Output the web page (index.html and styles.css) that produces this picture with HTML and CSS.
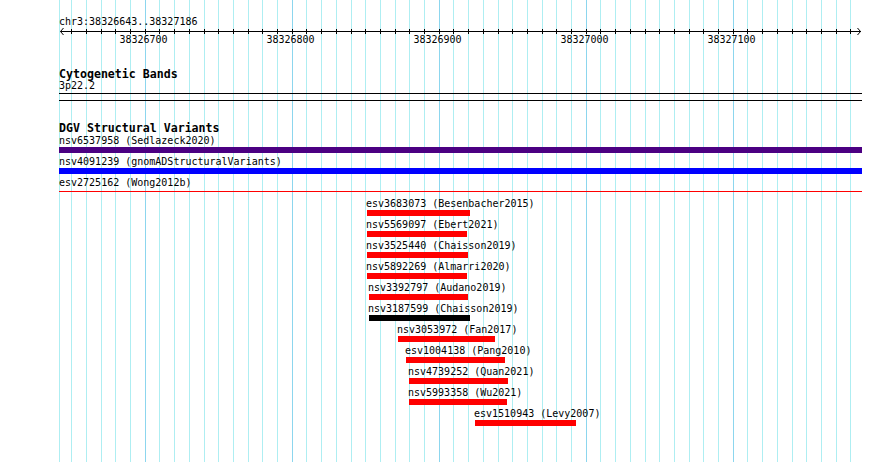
FILE: index.html
```html
<!DOCTYPE html>
<html>
<head>
<meta charset="utf-8">
<title>DGV Structural Variants</title>
<link rel="stylesheet" href="styles.css">
</head>
<body>
<div class="browser">
  <svg class="grid" width="890" height="462" viewBox="0 0 890 462" aria-hidden="true">
    <path class="minor" d="M59.5 0V462M71.5 0V462M86.5 0V462M101.5 0V462M115.5 0V462M130.5 0V462M159.5 0V462M174.5 0V462M189.5 0V462M204.5 0V462M218.5 0V462M233.5 0V462M248.5 0V462M262.5 0V462M277.5 0V462M306.5 0V462M321.5 0V462M336.5 0V462M351.5 0V462M365.5 0V462M380.5 0V462M395.5 0V462M409.5 0V462M424.5 0V462M453.5 0V462M468.5 0V462M483.5 0V462M498.5 0V462M512.5 0V462M527.5 0V462M542.5 0V462M556.5 0V462M571.5 0V462M600.5 0V462M615.5 0V462M630.5 0V462M645.5 0V462M659.5 0V462M674.5 0V462M689.5 0V462M703.5 0V462M718.5 0V462M747.5 0V462M762.5 0V462M777.5 0V462M792.5 0V462M806.5 0V462M821.5 0V462M836.5 0V462M850.5 0V462"/>
    <path class="major" d="M145.5 0V462M292.5 0V462M439.5 0V462M586.5 0V462M733.5 0V462"/>
  </svg>

  <div class="locus">chr3:38326643..38327186</div>

  <svg class="ruler" width="890" height="19" viewBox="0 0 890 19">
    <path class="axis" d="M60.5 4.5H861"/>
    <path class="axis" d="M63.5 1L60.5 4.5L63.5 8M857.5 1L860.5 4.5L857.5 8"/>
    <path class="axis" d="M71.5 2V7M86.5 2V7M101.5 2V7M115.5 2V7M130.5 2V7M145.5 2V7M159.5 2V7M174.5 2V7M189.5 2V7M204.5 2V7M218.5 2V7M233.5 2V7M248.5 2V7M262.5 2V7M277.5 2V7M292.5 2V7M306.5 2V7M321.5 2V7M336.5 2V7M351.5 2V7M365.5 2V7M380.5 2V7M395.5 2V7M409.5 2V7M424.5 2V7M439.5 2V7M453.5 2V7M468.5 2V7M483.5 2V7M498.5 2V7M512.5 2V7M527.5 2V7M542.5 2V7M556.5 2V7M571.5 2V7M586.5 2V7M600.5 2V7M615.5 2V7M630.5 2V7M645.5 2V7M659.5 2V7M674.5 2V7M689.5 2V7M703.5 2V7M718.5 2V7M733.5 2V7M747.5 2V7M762.5 2V7M777.5 2V7M792.5 2V7M806.5 2V7M821.5 2V7M836.5 2V7M850.5 2V7"/>
    <text class="tick-label" x="143.5" y="16">38326700</text>
    <text class="tick-label" x="290.5" y="16">38326800</text>
    <text class="tick-label" x="437.5" y="16">38326900</text>
    <text class="tick-label" x="584.5" y="16">38327000</text>
    <text class="tick-label" x="731.5" y="16">38327100</text>
  </svg>

  <section class="track cyto">
    <div class="track-title">Cytogenetic Bands</div>
    <div class="label">3p22.2</div>
    <div class="band"></div>
  </section>

  <section class="track dgv">
    <div class="track-title">DGV Structural Variants</div>
    <div class="features">
      <div class="feature full">
        <div class="label">nsv6537958 (Sedlazeck2020)</div>
        <div class="bar indigo"></div>
      </div>
      <div class="feature full">
        <div class="label">nsv4091239 (gnomADStructuralVariants)</div>
        <div class="bar blue"></div>
      </div>
      <div class="feature full">
        <div class="label">esv2725162 (Wong2012b)</div>
        <div class="bar thin red"></div>
      </div>
      <div class="feature" style="margin-left:308px">
        <div class="label">esv3683073 (Besenbacher2015)</div>
        <div class="bar red" style="width:103px"></div>
      </div>
      <div class="feature" style="margin-left:308px">
        <div class="label">nsv5569097 (Ebert2021)</div>
        <div class="bar red" style="width:100px"></div>
      </div>
      <div class="feature" style="margin-left:308px">
        <div class="label">nsv3525440 (Chaisson2019)</div>
        <div class="bar red" style="width:101px"></div>
      </div>
      <div class="feature" style="margin-left:308px">
        <div class="label">nsv5892269 (Almarri2020)</div>
        <div class="bar red" style="width:100px"></div>
      </div>
      <div class="feature" style="margin-left:310px">
        <div class="label">nsv3392797 (Audano2019)</div>
        <div class="bar red" style="width:99px"></div>
      </div>
      <div class="feature" style="margin-left:310px">
        <div class="label">nsv3187599 (Chaisson2019)</div>
        <div class="bar black" style="width:101px"></div>
      </div>
      <div class="feature" style="margin-left:339px">
        <div class="label">nsv3053972 (Fan2017)</div>
        <div class="bar red" style="width:97px"></div>
      </div>
      <div class="feature" style="margin-left:347px">
        <div class="label">esv1004138 (Pang2010)</div>
        <div class="bar red" style="width:99px"></div>
      </div>
      <div class="feature" style="margin-left:350px">
        <div class="label">nsv4739252 (Quan2021)</div>
        <div class="bar red" style="width:99px"></div>
      </div>
      <div class="feature" style="margin-left:350px">
        <div class="label">nsv5993358 (Wu2021)</div>
        <div class="bar red" style="width:98px"></div>
      </div>
      <div class="feature" style="margin-left:416px">
        <div class="label">esv1510943 (Levy2007)</div>
        <div class="bar red" style="width:101px"></div>
      </div>
    </div>
  </section>
</div>
</body>
</html>
```

FILE: styles.css
```css
html, body {
  margin: 0;
  padding: 0;
  background: #ffffff;
}

body {
  font-family: "DejaVu Sans Mono", "Liberation Mono", monospace;
  font-size: 10px;
  color: #000000;
}

.browser {
  position: relative;
  width: 890px;
  height: 462px;
  overflow: hidden;
}

.grid {
  position: absolute;
  left: 0;
  top: 0;
  display: block;
}

.grid .minor {
  stroke: #aeeef2;
  stroke-width: 1;
  fill: none;
}

.grid .major {
  stroke: #8cd6ee;
  stroke-width: 1;
  fill: none;
}

.locus,
.ruler,
.track {
  position: relative;
}

.locus {
  margin: 16px 0 0 59px;
  line-height: 11px;
  height: 11px;
  white-space: nowrap;
}

.ruler {
  display: block;
}

.ruler .axis {
  stroke: #000000;
  stroke-width: 1;
  fill: none;
}

.tick-label {
  font-family: "DejaVu Sans Mono", "Liberation Mono", monospace;
  font-size: 10px;
  text-anchor: middle;
  fill: #000000;
}

.track {
  margin-left: 59px;
  width: 803px;
}

.track-title {
  font-weight: bold;
  font-size: 11.6px;
  line-height: 12px;
  height: 12px;
  white-space: nowrap;
}

.label {
  line-height: 11px;
  height: 11px;
  white-space: nowrap;
}

.cyto {
  margin-top: 22px;
}

.band {
  margin-top: 2px;
  height: 6px;
  border-top: 1px solid #000000;
  border-bottom: 1px solid #000000;
}

.dgv {
  margin-top: 21px;
}

.features {
  display: flex;
  flex-direction: column;
  margin-top: 1px;
}

.feature {
  display: flex;
  flex-direction: column;
  height: 21px;
}

.feature .label {
  margin-left: -1px;
}

.feature.full .label {
  margin-left: 0;
}

.bar {
  margin-top: 1px;
  height: 6px;
}

.feature.full .bar {
  width: 803px;
}

.bar.thin {
  height: 1px;
  margin-top: 3px;
}

.indigo { background: #4b0082; }
.blue { background: #0000ff; }
.red { background: #ff0000; }
.black { background: #000000; }
```
